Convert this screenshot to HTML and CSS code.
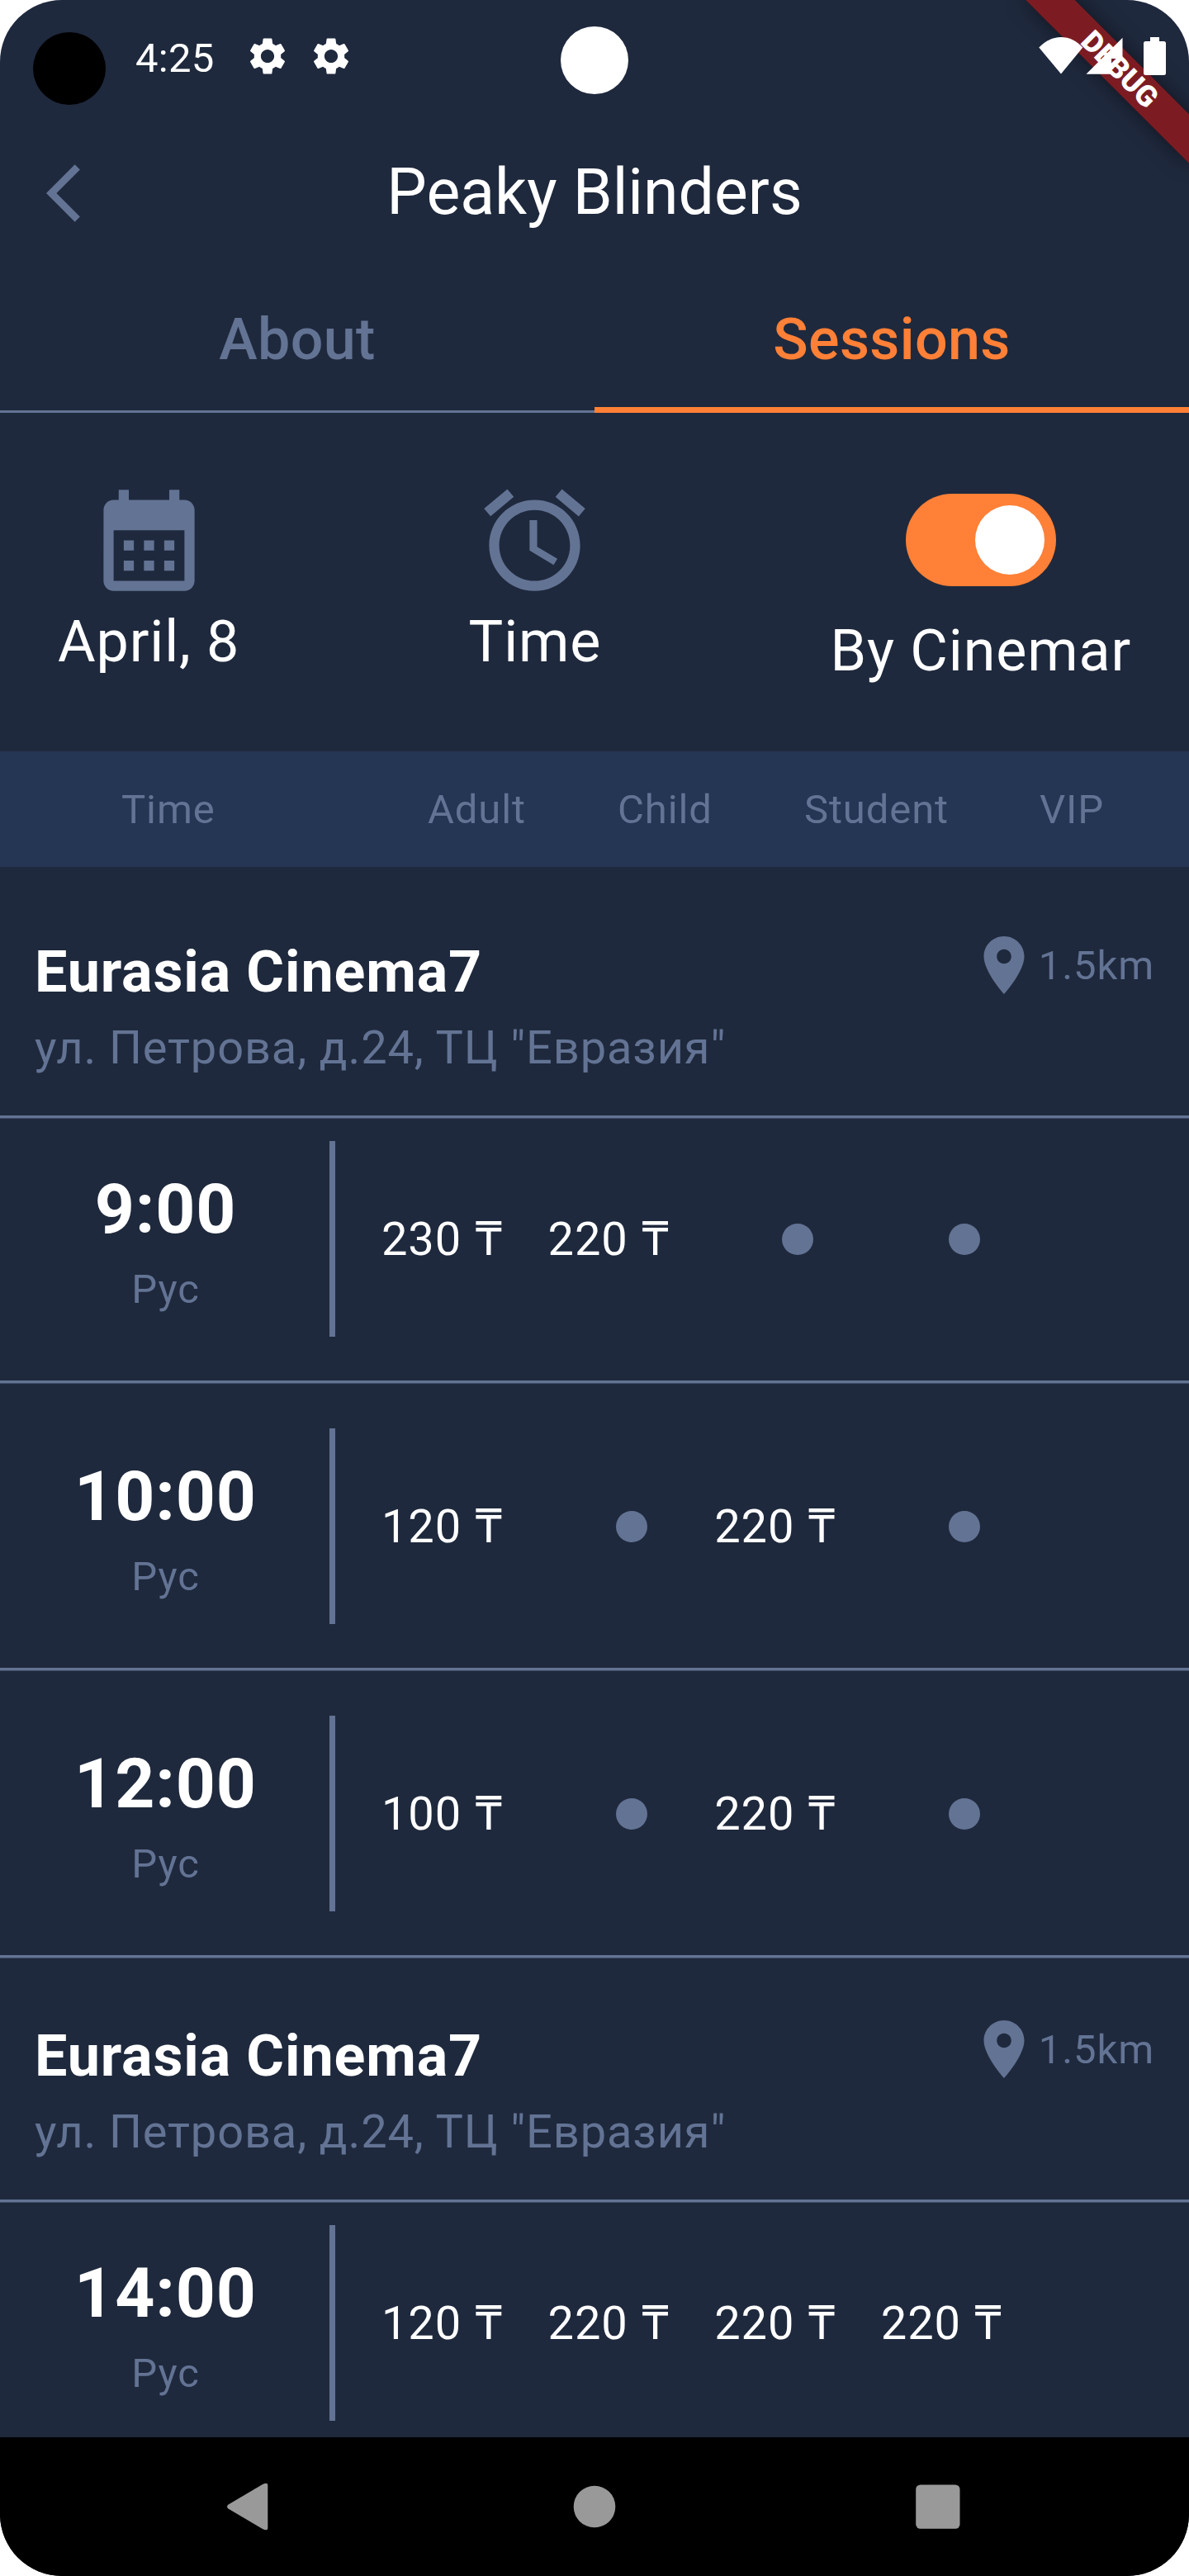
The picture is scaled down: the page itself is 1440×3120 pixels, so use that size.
FILE: index.html
```html
<!DOCTYPE html>
<html lang="en">
<head>
<meta charset="utf-8">
<title>Peaky Blinders</title>
<link rel="stylesheet" href="styles.css">
</head>
<body>
<svg class="sprite" aria-hidden="true">
  <symbol id="gear" viewBox="0 0 24 24"><path d="M19.14 12.94c.04-.3.06-.61.06-.94 0-.32-.02-.64-.07-.94l2.03-1.58c.18-.14.23-.41.12-.61l-1.92-3.32c-.12-.22-.37-.29-.59-.22l-2.39.96c-.5-.38-1.03-.7-1.62-.94l-.36-2.54c-.04-.24-.24-.41-.48-.41h-3.84c-.24 0-.43.17-.47.41l-.36 2.54c-.59.24-1.13.57-1.62.94l-2.39-.96c-.22-.08-.47 0-.59.22L2.74 8.87c-.12.21-.08.47.12.61l2.03 1.58c-.05.3-.09.63-.09.94s.02.64.07.94l-2.03 1.58c-.18.14-.23.41-.12.61l1.92 3.32c.12.22.37.29.59.22l2.39-.96c.5.38 1.03.7 1.62.94l.36 2.54c.05.24.24.41.48.41h3.84c.24 0 .44-.17.47-.41l.36-2.54c.59-.24 1.13-.56 1.62-.94l2.39.96c.22.08.47 0 .59-.22l1.92-3.32c.12-.22.07-.47-.12-.61l-2.01-1.58zM12 15.6c-1.98 0-3.6-1.62-3.6-3.6s1.62-3.6 3.6-3.6 3.6 1.62 3.6 3.6-1.62 3.6-3.6 3.6z"/></symbol>
  <symbol id="pin" viewBox="0 0 24 24"><path d="M12 2C8.13 2 5 5.13 5 9c0 5.25 7 13 7 13s7-7.75 7-13c0-3.87-3.13-7-7-7zm0 9.5c-1.38 0-2.5-1.12-2.5-2.5s1.12-2.5 2.5-2.5 2.5 1.12 2.5 2.5-1.12 2.5-2.5 2.5z"/></symbol>
</svg>

<div class="phone">
  <div class="debug-banner">DEBUG</div>
  <div class="camera"></div>

  <div class="status-bar">
    <span class="recorder"></span>
    <span class="clock">4:25</span>
    <svg class="gear"><use href="#gear"/></svg>
    <svg class="gear"><use href="#gear"/></svg>
    <svg class="signals" viewBox="0 0 160 50">
      <path d="M28 47.500L1.300 15.500C9 7.500 18 3 28 3s19 4.500 26.300 12.500z"/>
      <path d="M58.500 47.800L102.500 3.800V29H89V47.800z"/>
      <path d="M136 3h11v5h5.500a2.500 2.500 0 0 1 2.500 2.500v36a2.500 2.500 0 0 1-2.500 2.500h-22a2.500 2.500 0 0 1-2.500-2.500v-36a2.500 2.500 0 0 1 2.500-2.500h5.500z"/>
    </svg>
  </div>

  <header class="app-bar">
    <svg class="back" viewBox="0 0 12 24"><path d="M11.670 3.870L9.900 2.100 0 12l9.900 9.900 1.770-1.770L3.540 12z"/></svg>
    <h1 class="title">Peaky Blinders</h1>
  </header>

  <nav class="tabs">
    <a class="tab">About</a>
    <a class="tab tab-active">Sessions</a>
  </nav>

  <section class="filters">
    <div class="filter">
      <svg class="filter-icon" viewBox="0 0 24 24"><path d="M19 4h-1V2h-2v2H8V2H6v2H5c-1.110 0-1.990.900-1.990 2L3 20c0 1.100.890 2 2 2h14c1.100 0 2-.900 2-2V6c0-1.100-.900-2-2-2zm0 16H5V10h14v10zM9 14H7v-2h2v2zm4 0h-2v-2h2v2zm4 0h-2v-2h2v2zm-8 4H7v-2h2v2zm4 0h-2v-2h2v2zm4 0h-2v-2h2v2z"/></svg>
      <span>April, 8</span>
    </div>
    <div class="filter">
      <svg class="filter-icon" viewBox="0 0 24 24"><path d="M22 5.720l-4.600-3.860-1.290 1.530 4.600 3.860L22 5.720zM7.880 3.390L6.600 1.860 2 5.710l1.290 1.530 4.590-3.850zM12.500 8H11v6l4.750 2.850.750-1.230-4-2.370V8zM12 4c-4.970 0-9 4.030-9 9s4.020 9 9 9c4.970 0 9-4.030 9-9s-4.030-9-9-9zm0 16c-3.870 0-7-3.130-7-7s3.130-7 7-7 7 3.130 7 7-3.130 7-7 7z"/></svg>
      <span>Time</span>
    </div>
    <div class="filter filter-switch">
      <div class="switch"><div class="knob"></div></div>
      <span>By Cinemar</span>
    </div>
  </section>

  <div class="columns">
    <span>Time</span><span>Adult</span><span>Child</span><span>Student</span><span>VIP</span>
  </div>

  <main class="list">
    <section class="cinema">
      <div class="cinema-info">
        <div>
          <h2 class="cinema-name">Eurasia Cinema7</h2>
          <p class="cinema-address">ул. Петрова, д.24, ТЦ "Евразия"</p>
        </div>
        <div class="distance"><svg class="pin"><use href="#pin"/></svg><span>1.5km</span></div>
      </div>
      <div class="divider"></div>
      <div class="session">
        <div class="when"><span class="hour">9:00</span><span class="lang">Рус</span></div>
        <div class="bar"></div>
        <div class="prices"><span>230 ₸</span><span>220 ₸</span><i class="dot"></i><i class="dot"></i></div>
      </div>
      <div class="divider"></div>
      <div class="session">
        <div class="when"><span class="hour">10:00</span><span class="lang">Рус</span></div>
        <div class="bar"></div>
        <div class="prices"><span>120 ₸</span><i class="dot"></i><span>220 ₸</span><i class="dot"></i></div>
      </div>
      <div class="divider"></div>
      <div class="session">
        <div class="when"><span class="hour">12:00</span><span class="lang">Рус</span></div>
        <div class="bar"></div>
        <div class="prices"><span>100 ₸</span><i class="dot"></i><span>220 ₸</span><i class="dot"></i></div>
      </div>
      <div class="divider"></div>
    </section>
    <section class="cinema">
      <div class="cinema-info">
        <div>
          <h2 class="cinema-name">Eurasia Cinema7</h2>
          <p class="cinema-address">ул. Петрова, д.24, ТЦ "Евразия"</p>
        </div>
        <div class="distance"><svg class="pin"><use href="#pin"/></svg><span>1.5km</span></div>
      </div>
      <div class="divider"></div>
      <div class="session">
        <div class="when"><span class="hour">14:00</span><span class="lang">Рус</span></div>
        <div class="bar"></div>
        <div class="prices"><span>120 ₸</span><span>220 ₸</span><span>220 ₸</span><span>220 ₸</span></div>
      </div>
    </section>
  </main>

  <footer class="nav-bar">
    <svg class="nav-icon" viewBox="0 0 64 64"><path d="M4.500 29.500L46 5q6.300-3 6.300 1V58q0 4-6.300 1L4.500 34.500q-3-2.500 0-5z"/></svg>
    <svg class="nav-icon" viewBox="0 0 64 64"><circle cx="32" cy="32" r="25.300"/></svg>
    <svg class="nav-icon" viewBox="0 0 64 64"><rect x="5.200" y="5.500" width="53.300" height="53.300" rx="5.500"/></svg>
  </footer>
</div>
</body>
</html>
```
FILE: styles.css
```css
:root {
  --bg: #1f293d;
  --muted: #637394;
  --accent: #ff8036;
  --strip: #253554;
}

* { box-sizing: border-box; }

body {
  margin: 0;
  background: #fff;
  font-family: Roboto, Inter, sans-serif;
  letter-spacing: 0.875px;
  color: #fff;
}

h1, h2, p { margin: 0; }
svg { display: block; flex: none; }
.sprite { position: absolute; width: 0; height: 0; }

.phone {
  position: relative;
  display: flex;
  flex-direction: column;
  width: 1440px;
  height: 3120px;
  border-radius: 75px;
  background: var(--bg);
  overflow: hidden;
}

/* Overlays */
.debug-banner {
  position: absolute;
  top: 63px;
  left: 1216px;
  width: 280px;
  height: 42px;
  transform: rotate(45deg);
  background: #7c1c22;
  box-shadow: 0 0 25px rgba(0, 0, 0, 0.5);
  font-size: 35.7px;
  font-weight: 900;
  line-height: 42px;
  letter-spacing: 0;
  text-align: center;
}

.camera {
  position: absolute;
  top: 32px;
  left: 679px;
  width: 82px;
  height: 82px;
  border-radius: 50%;
  background: #fff;
}

/* Status bar */
.status-bar {
  position: relative;
  display: flex;
  align-items: flex-start;
  height: 136px;
  padding: 39px 23px 0 40px;
}

.recorder {
  width: 88px;
  height: 88px;
  border-radius: 50%;
  background: #000;
}

.clock {
  width: 133px;
  margin-left: 36px;
  padding-top: 3px;
  font-size: 49px;
  line-height: 58px;
  letter-spacing: 0.3px;
}

.gear {
  width: 54px;
  height: 54px;
  margin: 2px 23px 0 0;
  fill: #fff;
}

.signals {
  width: 160px;
  height: 50px;
  margin: 3px 0 0 auto;
  fill: #fff;
}

/* App bar */
.app-bar {
  display: grid;
  grid-template-columns: 1fr auto 1fr;
  align-items: center;
  height: 196px;
  padding: 0 56px;
}

.back {
  width: 42px;
  height: 84px;
  fill: var(--muted);
}

.title {
  font-size: 77px;
  font-weight: 400;
  line-height: 90px;
  letter-spacing: 0;
  margin-top: -2px;
}

/* Tabs */
.tabs {
  display: grid;
  grid-template-columns: 1fr 1fr;
  height: 168px;
}

.tab {
  padding-top: 38px;
  border-bottom: 3px solid var(--muted);
  color: var(--muted);
  font-size: 70px;
  font-weight: 500;
  line-height: 82px;
  letter-spacing: 0.35px;
  text-align: center;
}

.tab-active {
  border-bottom: 7px solid var(--accent);
  color: var(--accent);
}

/* Filters */
.filters {
  display: flex;
  justify-content: space-between;
  align-items: flex-start;
  height: 410px;
  padding: 81px 70px 0;
  font-size: 70px;
  line-height: 82px;
}

.filter {
  display: flex;
  flex-direction: column;
  align-items: center;
  gap: 8px;
}

.filter-icon {
  width: 147px;
  height: 147px;
  fill: var(--muted);
}

.filter-switch {
  gap: 37px;
  padding-top: 17px;
}

.switch {
  display: flex;
  justify-content: flex-end;
  width: 182px;
  height: 112px;
  padding: 14px;
  border-radius: 56px;
  background: var(--accent);
}

.knob {
  width: 84px;
  height: 84px;
  border-radius: 50%;
  background: #fff;
}

/* Price column titles */
.columns {
  display: grid;
  grid-template-columns: 371px 230px 226px 285px auto;
  align-items: center;
  height: 140px;
  padding: 2px 0 0 147px;
  background: var(--strip);
  color: var(--muted);
  font-size: 49px;
  line-height: 58px;
}

/* Session list */
.list {
  flex: 1;
  min-height: 0;
  padding-top: 9px;
  overflow: hidden;
}

.cinema-info {
  display: flex;
  justify-content: space-between;
  align-items: flex-start;
  height: 292px;
  padding: 77px 42px 0;
}

.cinema-name {
  font-size: 70px;
  font-weight: 700;
  line-height: 82px;
}

.cinema-address {
  margin-top: 18px;
  color: var(--muted);
  font-size: 56px;
  line-height: 66px;
}

.distance {
  display: flex;
  align-items: center;
  margin-top: -9px;
  color: var(--muted);
  font-size: 49px;
  line-height: 58px;
}

.distance span { margin-top: 2px; }

.pin {
  width: 84px;
  height: 84px;
  fill: var(--muted);
}

.divider {
  height: 4px;
  background: linear-gradient(var(--muted) 75%, #414e69 75%);
}

.session {
  display: flex;
  align-items: flex-start;
  padding: 54px 0 53px;
}

.cinema-info + .divider + .session { padding-top: 27px; }

.when {
  display: flex;
  flex-direction: column;
  align-items: center;
  gap: 19px;
  width: 399px;
  padding: 34px 0 0 2px;
}

.hour {
  font-size: 84px;
  font-weight: 700;
  line-height: 98px;
}

.lang {
  color: var(--muted);
  font-size: 49px;
  line-height: 58px;
}

.bar {
  width: 7px;
  height: 237px;
  background: var(--muted);
}

.prices {
  display: grid;
  grid-template-columns: repeat(4, 201.6px);
  align-items: center;
  height: 237px;
  margin-left: 56px;
  font-size: 56px;
  line-height: 66px;
  white-space: nowrap;
}

.dot {
  width: 38px;
  height: 38px;
  margin-left: 82px;
  border-radius: 50%;
  background: var(--muted);
}

/* System navigation */
.nav-bar {
  display: flex;
  justify-content: space-between;
  align-items: center;
  height: 168px;
  padding: 0 272px;
  background: #000;
}

.nav-icon {
  width: 64px;
  height: 64px;
  fill: #999;
}
```
